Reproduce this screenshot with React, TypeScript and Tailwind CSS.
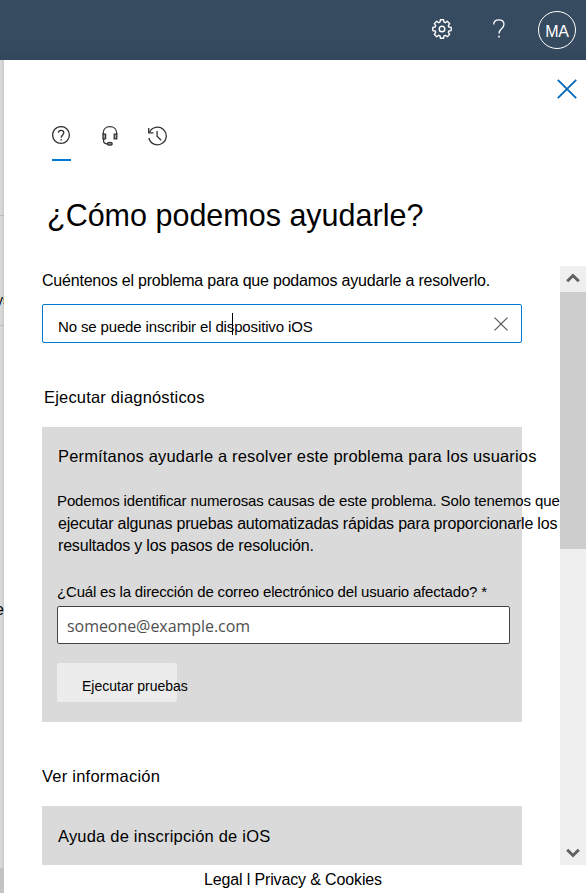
import type { ReactNode } from "react";

function GearIcon() {
  return (
    <svg width="20" height="20" viewBox="0 0 20 20" fill="none" stroke="#fff" strokeWidth="1.4" strokeLinejoin="round">
      <path d="M8.4.8h3.2l.4 2.4 1.3.5 2-1.4 2.4 2.4-1.4 2 .5 1.3 2.4.4v3.2l-2.4.4-.5 1.3 1.4 2-2.4 2.4-2-1.4-1.3.5-.4 2.4H8.4l-.4-2.4-1.3-.5-2 1.4-2.4-2.4 1.4-2-.5-1.3-2.4-.4V8.4l2.4-.4.5-1.3-1.4-2 2.4-2.4 2 1.4 1.3-.5z" />
      <circle cx="10" cy="10" r="2.8" />
    </svg>
  );
}

function QuestionIcon() {
  return (
    <svg width="12" height="19" viewBox="0 0 12 19" fill="none" stroke="#fff" strokeWidth="1.3">
      <path d="M.7 5.6C.8 2.6 2.8.8 5.8.8c3.1 0 5.2 1.8 5.2 4.5 0 4.4-5 4.4-5 9.1" />
      <path d="M6 16.8v1.7" strokeWidth="1.6" />
    </svg>
  );
}

function HelpTabIcon() {
  return (
    <svg width="19" height="19" viewBox="0 0 19 19" fill="none" stroke="#333" strokeWidth="1.3">
      <circle cx="9" cy="9" r="8.4" />
      <path d="M6.4 6.8c.1-1.6 1.1-2.5 2.7-2.5s2.7 1 2.7 2.4c0 2.2-2.6 2.3-2.6 5" />
      <path d="M9.2 13v1.4" />
    </svg>
  );
}

function HeadsetIcon() {
  return (
    <svg width="16" height="20" viewBox="0 0 16 20" fill="none" stroke="#333" strokeWidth="1.3">
      <path d="M1.2 8.5V7.2C1.2 3.2 4 .7 7.9.7s6.8 2.5 6.8 6.5v1.3" />
      <path d="M1 8.2h2.6v4.7H1zM12.2 8.2h2.6v4.7h-2.6z" fill="#aaa" />
      <path d="M1.6 13v2c0 1.8 1.2 2.8 3.6 2.8" />
      <ellipse cx="7.8" cy="17.7" rx="2.4" ry="1.4" fill="#999" />
    </svg>
  );
}

function HistoryIcon() {
  return (
    <svg width="20" height="20" viewBox="0 0 20 20" fill="none" stroke="#333" strokeWidth="1.3">
      <path d="M1.5 6.2A8.8 8.8 0 1 1 .9 12" />
      <path d="M.7 2v4.8h4.8" />
      <path d="M9.1 5v5.3l4 3.9" />
    </svg>
  );
}

function Cross({ size, width, color }: { size: number; width: number; color: string }) {
  return (
    <svg width={size} height={size} viewBox="0 0 20 20" fill="none" stroke={color} strokeWidth={width}>
      <path d="M.8.8l18.4 18.4M19.2.8L.8 19.2" />
    </svg>
  );
}

function Chevron({ up = false }: { up?: boolean }) {
  return (
    <svg width="14" height="10" viewBox="0 0 14 10" fill="none" stroke="#606060" strokeWidth="3">
      <path d={up ? "M1.2 8.3L7 2.5l5.8 5.8" : "M1.2 1.7L7 7.5l5.8-5.8"} />
    </svg>
  );
}

function Line({ className, children }: { className: string; children: ReactNode }) {
  return <div className={`whitespace-nowrap ${className}`}>{children}</div>;
}

function Scrollbar() {
  return (
    <div className="flex h-[599px] w-[26px] shrink-0 flex-col bg-[#efefef]">
      <div className="flex h-[26px] items-start justify-center pt-[7px]">
        <Chevron up />
      </div>
      <div className="h-[257px] bg-[#cdcdcd]" />
      <div className="flex flex-1 items-end justify-center pb-[7px]">
        <Chevron />
      </div>
    </div>
  );
}

function Diagnostics() {
  return (
    <section className="mt-[19px] h-[295px] w-[480px] bg-[#dadada] pl-[15px]">
      <Line className="ml-px pb-[2px] pt-[20px] text-[16.5px] leading-[18px] tracking-[0.16px]">
        Permítanos ayudarle a resolver este problema para los usuarios
      </Line>
      <Line className="mt-[24px] text-[15px] leading-5 tracking-[-0.12px]">
        Podemos identificar numerosas causas de este problema. Solo tenemos que
      </Line>
      <Line className="ml-px mt-[3px] text-base leading-5 tracking-[-0.2px]">
        ejecutar algunas pruebas automatizadas rápidas para proporcionarle los
      </Line>
      <Line className="ml-px mt-[2px] text-base leading-5 tracking-[-0.18px]">
        resultados y los pasos de resolución.
      </Line>
      <Line className="mt-[26px] text-[15px] leading-5 tracking-[-0.18px]">
        ¿Cuál es la dirección de correo electrónico del usuario afectado? *
      </Line>
      <div className="mt-[4px] flex h-[38px] w-[453px] items-center rounded-[2px] border border-[#444] bg-white pl-[9px] pt-px font-['Open_Sans',sans-serif] text-base tracking-[-0.05px] text-[#505050]">
        someone@example.com
      </div>
      <div className="mt-[19px] h-[39px] w-[120px] rounded-[2px] bg-[#ececec] pl-[25px] pt-[13px]">
        <Line className="text-sm leading-5">Ejecutar pruebas</Line>
      </div>
    </section>
  );
}

export default function App() {
  return (
    <div className="flex h-[893px] w-[586px] flex-col overflow-hidden bg-white font-['Liberation_Sans',Arial,sans-serif] text-black">
      <header className="flex h-[60px] shrink-0 items-center justify-end bg-linear-to-b from-[#364b60] from-75% to-[#31465a] pr-[10px]">
        <div className="mr-[41px] pb-[2px]">
          <GearIcon />
        </div>
        <div className="mr-[33px] pb-[3px]">
          <QuestionIcon />
        </div>
        <div className="flex size-[38px] items-center justify-center rounded-full border border-white pt-[3px] text-base leading-5 tracking-[-0.3px] text-white">
          MA
        </div>
      </header>
      <div className="flex min-h-0 flex-1">
        <aside className="flex w-1 shrink-0 flex-col overflow-hidden bg-linear-to-r from-[#dcdcdc] to-[#cbcbcb] text-base leading-5">
          <div className="h-[156px] border-b border-[#bbb]" />
          <div className="h-[110px] border-b border-[#bbb] pt-[74px] text-sm">
            <span className="-ml-[4px]">ys</span>
          </div>
          <div className="h-[542px] pt-[274px]">
            <span className="-ml-[5px]">e</span>
          </div>
          <div className="flex-1 bg-[#c3c3c3]" />
        </aside>
        <main className="flex min-w-0 flex-1 flex-col">
          <div className="flex justify-end pr-[9px] pt-[19px]">
            <Cross size={20} width={1.8} color="#0067b8" />
          </div>
          <nav className="ml-[48px] mt-[26px] flex h-[36px] items-start">
            <div className="flex h-[36px] w-[19px] flex-col justify-between border-b-2 border-[#0078d4] pt-px">
              <HelpTabIcon />
            </div>
            <div className="ml-[31px] pt-px">
              <HeadsetIcon />
            </div>
            <div className="ml-[30px] pt-px">
              <HistoryIcon />
            </div>
          </nav>
          <h1 className="ml-[43px] mt-[35px] whitespace-nowrap text-[30.5px] leading-[38px]">¿Cómo podemos ayudarle?</h1>
          <div className="mt-[32px] flex">
            <div className="w-[556px] shrink-0 pl-[38px]">
              <Line className="pt-[5px] text-base leading-5 tracking-[-0.21px]">
                Cuéntenos el problema para que podamos ayudarle a resolverlo.
              </Line>
              <div className="mt-[13px] flex h-[39px] w-[480px] items-center justify-between rounded-[2px] border border-[#0078d4] pl-[15px] pr-[13px]">
                <div className="relative pt-[6px]">
                  <Line className="text-[15px] leading-5 tracking-[-0.14px]">No se puede inscribir el dispositivo iOS</Line>
                  <div className="absolute left-[174px] top-[2px] h-[22px] w-px bg-black" />
                </div>
                <Cross size={14} width={1.7} color="#555" />
              </div>
              <Line className="ml-[2px] mt-[45px] pb-[2px] text-[16.5px] leading-[18px] tracking-[0.18px]">Ejecutar diagnósticos</Line>
              <Diagnostics />
              <Line className="mt-[45px] pb-[2px] text-[16.5px] leading-[18px] tracking-[0.23px]">Ver información</Line>
              <section className="mt-[19px] h-[59px] w-[480px] bg-[#dadada] pl-[16px] pt-[21px]">
                <Line className="text-[16.5px] leading-[18px] tracking-[0.2px]">Ayuda de inscripción de iOS</Line>
              </section>
            </div>
            <Scrollbar />
          </div>
          <footer className="ml-[200px] mt-[5px] whitespace-nowrap text-base leading-5 tracking-[-0.14px]">
            Legal l Privacy &amp; Cookies
          </footer>
        </main>
      </div>
    </div>
  );
}
